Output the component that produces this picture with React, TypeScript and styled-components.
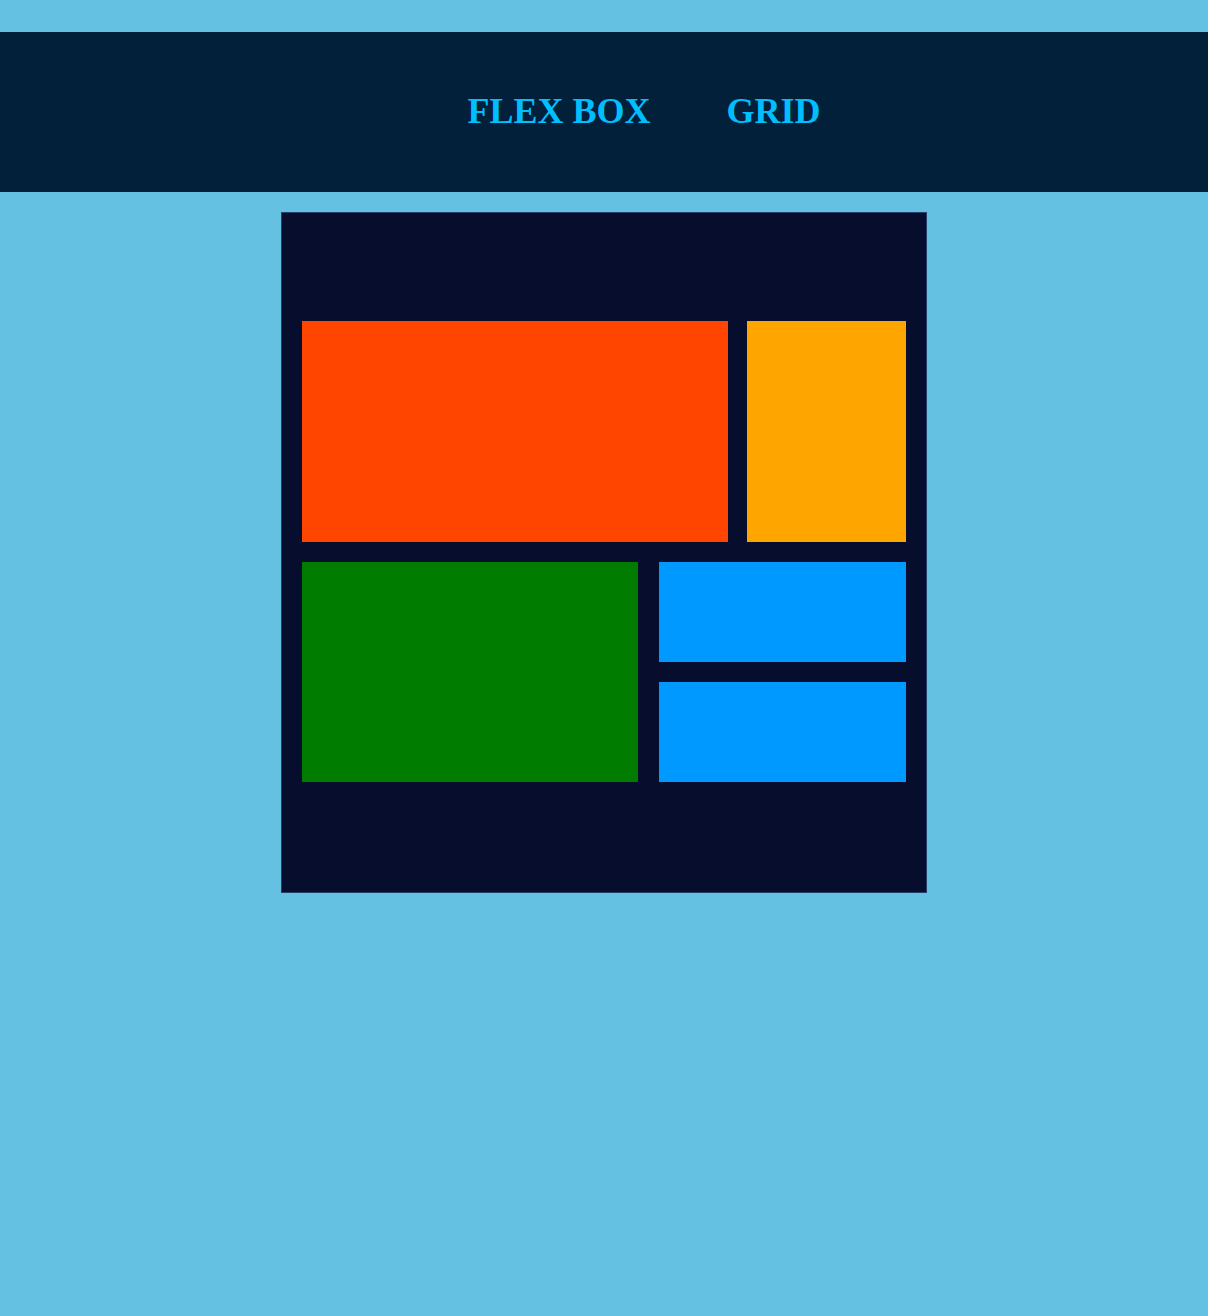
import React from "react";
import styled, { createGlobalStyle } from "styled-components";

const Global = createGlobalStyle`
  html, body { margin: 0; padding: 0; background: #65c1e2; }
  body { font-family: "Liberation Serif", "Times New Roman", serif; }
`;

const Page = styled.div`
  padding-top: 32px;
  min-height: 1316px;
  box-sizing: border-box;
`;

const Header = styled.header`
  height: 160px;
  background: #02203a;
  display: flex;
  align-items: center;
  justify-content: center;
  gap: 76px;
  padding-left: 80px;
  box-sizing: border-box;
`;

const NavLink = styled.a`
  color: #00bfff;
  font-family: "Liberation Serif", "Times New Roman", serif;
  font-weight: bold;
  font-size: 36px;
  text-decoration: none;
  line-height: 1;
  margin-top: -2px;
`;

const Board = styled.main`
  width: 646px;
  height: 681px;
  box-sizing: border-box;
  margin: 20px auto 0;
  background: #060d2d;
  border: 1px solid #22406a;
  padding: 0 20px 2px;
  display: flex;
  flex-direction: column;
  justify-content: center;
  gap: 20px;
`;

const Row = styled.div<{ $h: number; $gap: number }>`
  display: flex;
  height: ${(p) => p.$h}px;
  gap: ${(p) => p.$gap}px;
`;

const Tile = styled.div<{ $w?: number; $bg: string; $grow?: boolean }>`
  background: ${(p) => p.$bg};
  ${(p) => (p.$w ? `width: ${p.$w}px;` : "")}
  ${(p) => (p.$grow ? "flex: 1;" : "flex-shrink: 0;")}
`;

const Stack = styled.div`
  flex: 1;
  display: flex;
  flex-direction: column;
  gap: 20px;
  & > div {
    flex: 1;
  }
`;

export default function App() {
  return (
    <>
      <Global />
      <Page>
        <Header>
          <NavLink href="#">FLEX BOX</NavLink>
          <NavLink href="#">GRID</NavLink>
        </Header>
        <Board>
          <Row $h={221} $gap={19}>
            <Tile $w={426} $bg="#ff4500" />
            <Tile $grow $bg="#ffa500" />
          </Row>
          <Row $h={220} $gap={21}>
            <Tile $w={336} $bg="#007d00" />
            <Stack>
              <Tile $bg="#0099ff" />
              <Tile $bg="#0099ff" />
            </Stack>
          </Row>
        </Board>
      </Page>
    </>
  );
}
